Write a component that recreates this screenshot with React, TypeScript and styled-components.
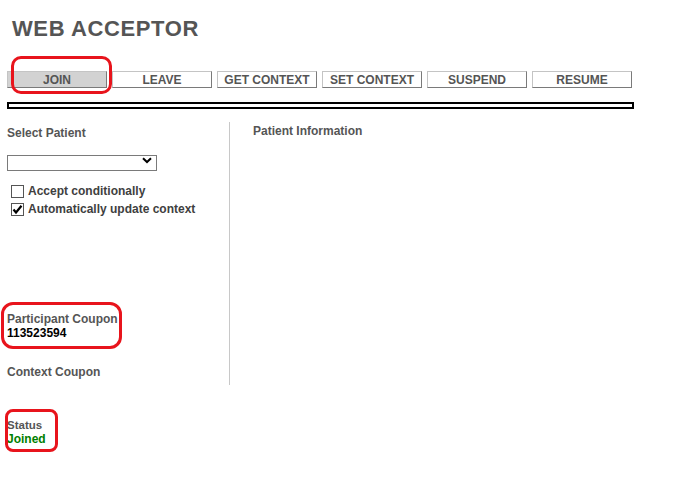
import React from 'react';
import styled, { createGlobalStyle } from 'styled-components';

const Global = createGlobalStyle`
  html, body { margin: 0; padding: 0; background: #fff; }
  body { font-family: "Liberation Sans", Arial, sans-serif; }
`;

const Page = styled.div`
  position: relative;
  box-sizing: border-box;
  width: 682px;
  min-height: 488px;
  padding: 16px 0 0 7px;
`;

const Title = styled.h1`
  margin: 0 0 0 5px;
  font-size: 22px;
  line-height: 26px;
  font-weight: 700;
  color: #555;
  letter-spacing: 0.6px;
`;

const Toolbar = styled.div`
  display: flex;
  gap: 5px;
  margin-top: 29px;
`;

const ToolButton = styled.button<{ $active?: boolean }>`
  box-sizing: border-box;
  width: 100px;
  height: 17px;
  margin: 0;
  padding: 1px 0 0;
  font: bold 12px/15px "Liberation Sans", Arial, sans-serif;
  color: #555;
  background: ${(p) => (p.$active ? '#d2d2d2' : '#fff')};
  border: 1px solid;
  border-color: #c4c4c4 #7a7a7a #7a7a7a #c4c4c4;
`;

const Bar = styled.div`
  box-sizing: border-box;
  width: 627px;
  height: 7px;
  margin-top: 14px;
  border: 2px solid #000;
`;

const Columns = styled.div`
  display: flex;
  margin-top: 13px;
`;

const LeftCol = styled.div`
  display: flex;
  flex-direction: column;
  width: 222px;
  height: 263px;
  border-right: 1px solid #c8c8c8;
`;

const RightCol = styled.div`
  padding-left: 23px;
`;

const FieldLabel = styled.div<{ $mt?: number; $size?: number }>`
  margin-top: ${(p) => p.$mt ?? 0}px;
  font-size: ${(p) => p.$size ?? 12}px;
  line-height: ${(p) => (p.$size && p.$size < 12 ? 13 : 14)}px;
  font-weight: 700;
  color: #555;
`;

const Value = styled.div<{ $color?: string }>`
  font-size: 12px;
  line-height: 14px;
  font-weight: 700;
  color: ${(p) => p.$color ?? '#000'};
`;

const SelectWrap = styled.div`
  position: relative;
  width: 150px;
  height: 16px;
  margin-top: 13px;
`;

const Select = styled.select`
  appearance: none;
  -webkit-appearance: none;
  box-sizing: border-box;
  width: 150px;
  height: 16px;
  margin: 0;
  padding: 0;
  border: 1px solid #7a7a7a;
  border-radius: 0;
  background: #fff;
  font: 12px "Liberation Sans", Arial, sans-serif;
`;

const Chevron = styled.svg`
  position: absolute;
  right: 5px;
  top: 4px;
  pointer-events: none;
`;

const CheckList = styled.div`
  display: flex;
  flex-direction: column;
  margin-top: 13px;
`;

const CheckRow = styled.label`
  display: flex;
  align-items: center;
  gap: 4px;
  height: 18px;
  padding-left: 4px;
  font-size: 12px;
  font-weight: 700;
  color: #404040;
`;

const Box = styled.span`
  position: relative;
  box-sizing: border-box;
  width: 13px;
  height: 13px;
  border: 1px solid #555;
  background: #fff;
  flex: none;
`;

const Tick = styled.svg`
  position: absolute;
  left: 0;
  top: 0;
`;

const StatusBlock = styled.div`
  margin-top: 34px;
`;

const Annotation = styled.div<{ $x: number; $y: number; $w: number; $h: number; $r: number }>`
  position: absolute;
  left: ${(p) => p.$x}px;
  top: ${(p) => p.$y}px;
  width: ${(p) => p.$w}px;
  height: ${(p) => p.$h}px;
  box-sizing: border-box;
  border: 3px solid #e8141c;
  border-radius: ${(p) => p.$r}px;
  pointer-events: none;
`;

const buttons = ['JOIN', 'LEAVE', 'GET CONTEXT', 'SET CONTEXT', 'SUSPEND', 'RESUME'];

function Checkbox({ checked }: { checked?: boolean }) {
  return (
    <Box>
      {checked && (
        <Tick width="11" height="11" viewBox="0 0 11 11">
          <path d="M1.5 5.5 L4 8.5 L9.5 1.8" fill="none" stroke="#000" strokeWidth="2.2" />
        </Tick>
      )}
    </Box>
  );
}

export default function App() {
  return (
    <Page>
      <Global />
      <Title>WEB ACCEPTOR</Title>
      <Toolbar>
        {buttons.map((b, i) => (
          <ToolButton key={b} $active={i === 0}>
            {b}
          </ToolButton>
        ))}
      </Toolbar>
      <Bar />
      <Columns>
        <LeftCol>
          <FieldLabel $mt={4}>Select Patient</FieldLabel>
          <SelectWrap>
            <Select defaultValue="">
              <option value=""></option>
            </Select>
            <Chevron width="10" height="7" viewBox="0 0 10 7">
              <path d="M1 1.2 L5 5 L9 1.2" fill="none" stroke="#000" strokeWidth="2" />
            </Chevron>
          </SelectWrap>
          <CheckList>
            <CheckRow>
              <Checkbox />
              Accept conditionally
            </CheckRow>
            <CheckRow>
              <Checkbox checked />
              Automatically update context
            </CheckRow>
          </CheckList>
          <FieldLabel $mt={94}>Participant Coupon</FieldLabel>
          <Value>113523594</Value>
          <FieldLabel $mt={25}>Context Coupon</FieldLabel>
        </LeftCol>
        <RightCol>
          <FieldLabel $mt={2}>Patient Information</FieldLabel>
        </RightCol>
      </Columns>
      <StatusBlock>
        <FieldLabel $size={11.5}>Status</FieldLabel>
        <Value $color="#008000">Joined</Value>
      </StatusBlock>
      <Annotation $x={11} $y={56} $w={101} $h={38} $r={10} />
      <Annotation $x={1} $y={302} $w={121} $h={47} $r={12} />
      <Annotation $x={5} $y={409} $w={53} $h={43} $r={8} />
    </Page>
  );
}
